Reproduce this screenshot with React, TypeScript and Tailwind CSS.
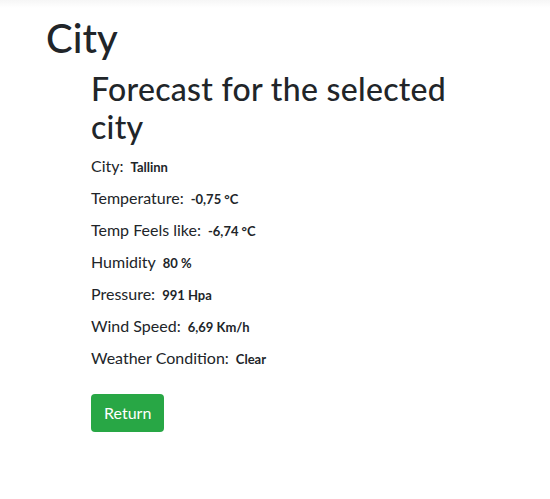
import React from "react";

const rows: [string, string][] = [
  ["City:", "Tallinn"],
  ["Temperature:", "-0,75 °C"],
  ["Temp Feels like:", "-6,74 °C"],
  ["Humidity", "80 %"],
  ["Pressure:", "991 Hpa"],
  ["Wind Speed:", "6,69 Km/h"],
  ["Weather Condition:", "Clear"],
];

export default function App() {
  return (
    <div className="min-h-[499px] bg-white text-[#212529]" style={{ fontFamily: "Lato, 'Noto Sans', sans-serif" }}>
      <div className="h-[8px] bg-gradient-to-b from-[#f6f6f6] to-white" />
      <div className="pl-[46px] pt-[6px]">
        <h1 className="text-[40px] leading-[48px] font-medium">City</h1>
        <div className="pl-[45px] w-[420px] pt-[8px]">
          <h2 className="text-[32px] leading-[38px] font-medium tracking-[0.3px]">Forecast for the selected city</h2>
          <div className="mt-[8px] flex flex-col">
            {rows.map(([l, v]) => (
              <div key={l} className="flex items-baseline h-[32px]">
                <span className="text-[16px] font-normal">{l}</span>
                <span className="ml-[7px] text-[13px] font-bold">{v}</span>
              </div>
            ))}
          </div>
          <button className="mt-[16px] bg-[#28a745] text-white text-[16px] leading-[24px] px-[13px] py-[7px] rounded-[4px]">
            Return
          </button>
        </div>
      </div>
    </div>
  );
}
